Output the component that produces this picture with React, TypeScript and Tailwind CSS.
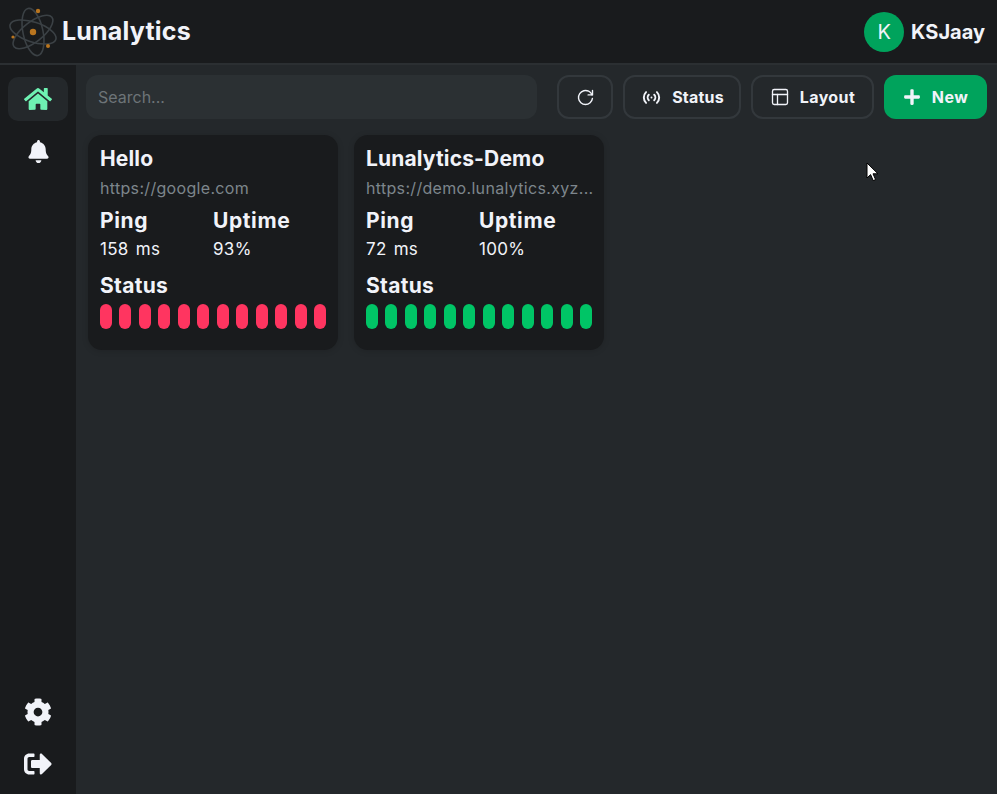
import { ReactElement } from "react";
import { FaBell, FaCog, FaHome, FaPlus, FaSignOutAlt } from "react-icons/fa";
import { TbAccessPoint, TbReload } from "react-icons/tb";
import { PanelsTopLeft } from "lucide-react";

interface ICardProps {
  name: string;
  url: string;
  ping: string;
  uptime: string;
  barColor: string;
}

const bars = Array.from({ length: 12 }, (_, i) => i);

const AtomLogo = (): ReactElement => (
  <svg width="48" height="52" viewBox="0 0 48 52" fill="none">
    <g stroke="#3b4145" strokeWidth="1.6">
      <ellipse cx="24" cy="26" rx="10" ry="24" transform="rotate(-12 24 26)" />
      <ellipse cx="24" cy="26" rx="10" ry="24" transform="rotate(52 24 26)" />
      <ellipse cx="24" cy="26" rx="10" ry="24" transform="rotate(-72 24 26)" />
    </g>
    <circle cx="24" cy="26" r="3.2" fill="#b9751f" />
    <circle cx="29" cy="5" r="2.2" fill="#b9751f" />
    <circle cx="39" cy="40" r="2" fill="#b9751f" />
    <circle cx="4" cy="31" r="1.6" fill="#b9751f" />
  </svg>
);

const MonitorCard = ({ name, url, ping, uptime, barColor }: ICardProps): ReactElement => {
  return (
    <div className="w-[250px] h-[215px] bg-[#191b1d] rounded-[14px] px-3 pt-[11px] shadow-[0_1px_6px_rgba(0,0,0,0.15)]">
      <p className="text-[21px] leading-[26px] font-bold text-[#f1f3f9] tracking-[0.15px]">{name}</p>
      <p className="mt-[6px] text-[16px] leading-[21px] text-[#7d868c] whitespace-nowrap tracking-[0.32px]">{url}</p>
      <div className="mt-[9px] flex">
        <div className="w-[113px]">
          <p className="text-[21px] leading-[26px] font-bold text-[#f1f3f9] tracking-[0.6px]">Ping</p>
          <p className="mt-[4px] text-[17px] leading-[22px] text-[#f1f3f9] tracking-[0.3px] [word-spacing:2px]">{ping}</p>
        </div>
        <div>
          <p className="text-[21px] leading-[26px] font-bold text-[#f1f3f9] tracking-[0.6px]">Uptime</p>
          <p className="mt-[4px] text-[17px] leading-[22px] text-[#f1f3f9] tracking-[0.3px]">{uptime}</p>
        </div>
      </div>
      <p className="mt-[13px] text-[21px] leading-[26px] font-bold text-[#f1f3f9] tracking-[0.3px]">Status</p>
      <div className="mt-[5px] flex justify-between">
        {bars.map((i) => (
          <span key={i} className={`w-[12px] h-[25px] rounded-full ${barColor}`} />
        ))}
      </div>
    </div>
  );
};

const App = (): ReactElement => {
  return (
    <div className="relative w-[997px] h-[794px] overflow-hidden bg-[#24282b] font-['Inter','Noto_Sans',sans-serif] flex flex-col">
      <header className="h-[65px] shrink-0 bg-[#191b1d] border-b-2 border-[#2b2f32] flex items-center justify-between pl-[9px] pr-[12px]">
        <div className="flex items-center gap-[5px]">
          <AtomLogo />
          <p className="mt-[1px] text-[25px] font-bold text-[#f1f3f9] tracking-[0.2px]">Lunalytics</p>
        </div>
        <div className="flex items-center gap-[7px]">
          <div className="w-[40px] h-[40px] rounded-full bg-[#00a35c] flex items-center justify-center text-[20px] text-[#f1f3f9]">
            K
          </div>
          <p className="text-[20px] font-bold text-[#f1f3f9]">KSJaay</p>
        </div>
      </header>

      <div className="flex flex-1 min-h-0">
        <aside className="w-[76px] shrink-0 bg-[#191b1d] flex flex-col items-center justify-between pt-[12px] pb-[16px]">
          <div className="flex flex-col items-center">
            <button className="w-[60px] h-[44px] rounded-[10px] bg-[#24282b] flex items-center justify-center text-[#6ef2b2]">
              <FaHome size={28} />
            </button>
            <button className="mt-[8px] h-[44px] flex items-center justify-center text-[#f1f3f9]">
              <FaBell size={23} />
            </button>
          </div>
          <div className="flex flex-col items-center gap-[24px]">
            <FaCog size={28} className="text-[#f1f3f9]" />
            <FaSignOutAlt size={28} className="text-[#f1f3f9]" />
          </div>
        </aside>

        <main className="flex-1 min-w-0 pt-[10px] px-[10px]">
          <div className="flex items-center">
            <div className="w-[451px] h-[44px] rounded-[12px] bg-[#2b3033] flex items-center px-3 text-[16px] text-[#6d7478]">
              Search...
            </div>
            <button className="ml-[20px] w-[56px] h-[44px] rounded-[12px] border-2 border-[#33383c] flex items-center justify-center text-[#f1f3f9]">
              <TbReload size={21} strokeWidth={1.6} />
            </button>
            <button className="ml-[10px] w-[118px] h-[44px] rounded-[12px] border-2 border-[#33383c] flex items-center justify-center gap-[9px] text-[16px] font-bold text-[#f1f3f9] tracking-[0.2px]">
              <TbAccessPoint size={23} />
              Status
            </button>
            <button className="ml-[10px] w-[123px] h-[44px] rounded-[12px] border-2 border-[#33383c] flex items-center justify-center gap-[10px] text-[16px] font-bold text-[#f1f3f9] tracking-[0.4px]">
              <PanelsTopLeft size={20} strokeWidth={1.6} />
              Layout
            </button>
            <button className="ml-[10px] w-[103px] h-[44px] rounded-[12px] bg-[#00a35c] flex items-center justify-center gap-[11px] text-[16px] font-bold text-[#f1f3f9] tracking-[0.5px]">
              <FaPlus size={18} />
              New
            </button>
          </div>

          <div className="mt-[16px] ml-[2px] flex gap-[16px]">
            <MonitorCard
              name="Hello"
              url="https://google.com"
              ping="158 ms"
              uptime="93%"
              barColor="bg-[#ff3560]"
            />
            <MonitorCard
              name="Lunalytics-Demo"
              url="https://demo.lunalytics.xyz..."
              ping="72 ms"
              uptime="100%"
              barColor="bg-[#00c566]"
            />
          </div>
        </main>
      </div>

      {/* mouse pointer caught in the capture */}
      <svg className="absolute left-[866px] top-[162px]" width="13" height="20" viewBox="0 0 13 20">
        <path d="M1 1v15l3.6-3.4 2.6 6 2.4-1-2.6-5.8H12z" fill="#fff" stroke="#000" strokeWidth="1" />
      </svg>
    </div>
  );
};

export default App;
